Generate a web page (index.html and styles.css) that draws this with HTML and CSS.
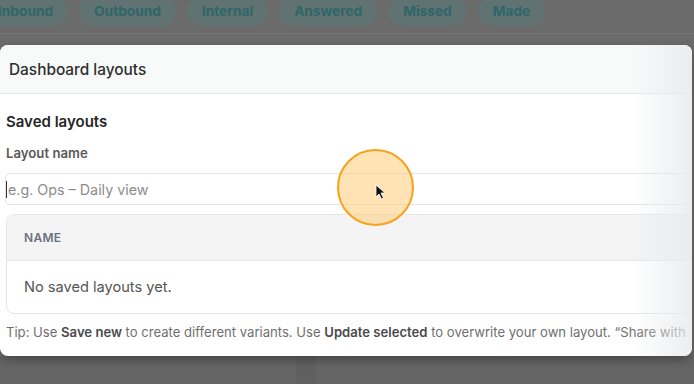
FILE: index.html
```html
<!DOCTYPE html>
<html lang="en">

<head>
    <meta charset="UTF-8">
    <meta name="viewport" content="width=device-width, initial-scale=1.0">
    <title>Dashboard layouts</title>
    <link rel="stylesheet" href="styles.css">
</head>

<body>
    <div class="page">
        <div class="filter-chips">
            <span class="chip">Inbound</span>
            <span class="chip">Outbound</span>
            <span class="chip">Internal</span>
            <span class="chip">Answered</span>
            <span class="chip">Missed</span>
            <span class="chip">Made</span>
        </div>
        <div class="divider"></div>

        <div class="modal">
            <div class="modal-header">
                <h2>Dashboard layouts</h2>
            </div>
            <div class="modal-body">
                <h3>Saved layouts</h3>
                <label class="field-label" for="layoutName">Layout name</label>
                <div class="input-wrap">
                    <span class="caret"></span>
                    <input type="text" id="layoutName" placeholder="e.g. Ops – Daily view">
                </div>
                <div class="layout-table">
                    <div class="table-head">NAME</div>
                    <div class="table-empty">No saved layouts yet.</div>
                </div>
                <p class="tip">Tip: Use <b>Save new</b> to create different variants. Use <b>Update selected</b> to overwrite your own layout. “Share with</p>
            </div>
            <div class="edge-fade"></div>
        </div>

        <div class="below">
            <div class="below-card"></div>
            <div class="below-col"></div>
            <div class="below-card wide"></div>
        </div>

        <!-- click highlight from the recording -->
        <div class="click-ring">
            <svg class="pointer" width="12" height="16" viewBox="0 0 12 16">
                <path d="M1 1 L1 13 L4 10 L6.5 15 L8.5 14 L6 9 L10 9 Z" fill="#111" stroke="#fff" stroke-width="0.8" />
            </svg>
        </div>
    </div>
</body>

</html>
```

FILE: styles.css
```css
/* Reset */
* {
    margin: 0;
    padding: 0;
    box-sizing: border-box;
}

body {
    width: 694px;
    height: 384px;
    overflow: hidden;
    background: #6b6b6b;
    font-family: 'Inter', 'Liberation Sans', sans-serif;
    color: #2b2b2b;
}

.page {
    position: relative;
    height: 384px;
}

/* Filter chips behind the overlay */
.filter-chips {
    display: flex;
    gap: 11px;
    margin-left: -17px;
    margin-top: -4px;
    height: 30px;
}

.chip {
    display: flex;
    align-items: center;
    padding: 0 15px;
    height: 30px;
    border-radius: 15px;
    background: #607271;
    color: #2d676b;
    font-size: 13.7px;
    font-weight: 700;
}

.divider {
    height: 1px;
    margin-top: 7px;
    background: #757575;
}

/* Modal */
.modal {
    position: relative;
    margin-top: 11px;
    margin-right: 2px;
    height: 311px;
    background: #ffffff;
    border-radius: 8px;
    overflow: hidden;
    box-shadow: 0 4px 10px rgba(0, 0, 0, 0.3);
}

.modal-header {
    height: 49px;
    display: flex;
    align-items: center;
    padding: 1px 0 0 9px;
    background: #f8f9f9;
    border-bottom: 1px solid #e6e8e9;
}

.modal-header h2 {
    font-size: 15.4px;
    font-weight: 500;
    color: #2e2e2e;
}

.modal-body {
    padding: 18px 0 0 5px;
}

.modal-body h3 {
    font-size: 15px;
    font-weight: 600;
    line-height: 20px;
    color: #262626;
    padding-left: 1px;
}

.field-label {
    display: block;
    margin-top: 12px;
    padding-left: 1px;
    font-size: 13.2px;
    font-weight: 600;
    line-height: 18px;
    color: #5a5a5a;
}

.input-wrap {
    position: relative;
    margin-top: 11px;
    width: 720px;
}

.input-wrap input {
    width: 100%;
    height: 32px;
    border: 1px solid #e2e4e8;
    border-radius: 4px;
    padding-left: 2px;
    font-family: inherit;
    font-size: 14.3px;
    color: #333;
    outline: none;
    background: #fff;
}

.input-wrap input::placeholder {
    color: #8c8c8c;
}

.caret {
    position: absolute;
    left: 1px;
    top: 8px;
    width: 1px;
    height: 17px;
    background: #333;
}

/* Saved layouts table */
.layout-table {
    margin-top: 9px;
    margin-left: 1px;
    width: 720px;
    border: 1px solid #e5e6e8;
    border-radius: 8px;
    overflow: hidden;
}

.table-head {
    height: 46px;
    display: flex;
    align-items: center;
    padding-left: 17px;
    background: #f4f4f5;
    border-bottom: 1px solid #e5e6e8;
    font-size: 12px;
    font-weight: 600;
    letter-spacing: 0.3px;
    color: #6b7280;
}

.table-empty {
    height: 52px;
    display: flex;
    align-items: center;
    padding-left: 17px;
    font-size: 14.6px;
    color: #555;
}

.tip {
    margin-top: 9px;
    padding-left: 1px;
    font-size: 13.1px;
    line-height: 18px;
    color: #6f6f6f;
    white-space: nowrap;
}

.tip b {
    font-weight: 600;
    color: #4a4a4a;
}

.edge-fade {
    position: absolute;
    top: 0;
    right: 0;
    width: 60px;
    height: 100%;
    background: linear-gradient(90deg, rgba(232, 234, 236, 0), rgba(232, 234, 236, 0.85));
}

/* Dimmed content under the modal */
.below {
    display: flex;
    height: 40px;
}

.below-card {
    width: 296px;
    background: #656565;
}

.below-col {
    width: 20px;
    background: #606060;
}

.below-card.wide {
    flex: 1;
}

/* Click highlight */
.click-ring {
    position: absolute;
    left: 337px;
    top: 153px;
    width: 77px;
    height: 77px;
    border-radius: 50%;
    background: rgba(255, 204, 120, 0.55);
    border: 2px solid #f7a21b;
}

.pointer {
    position: absolute;
    left: 36px;
    top: 33px;
}
```
